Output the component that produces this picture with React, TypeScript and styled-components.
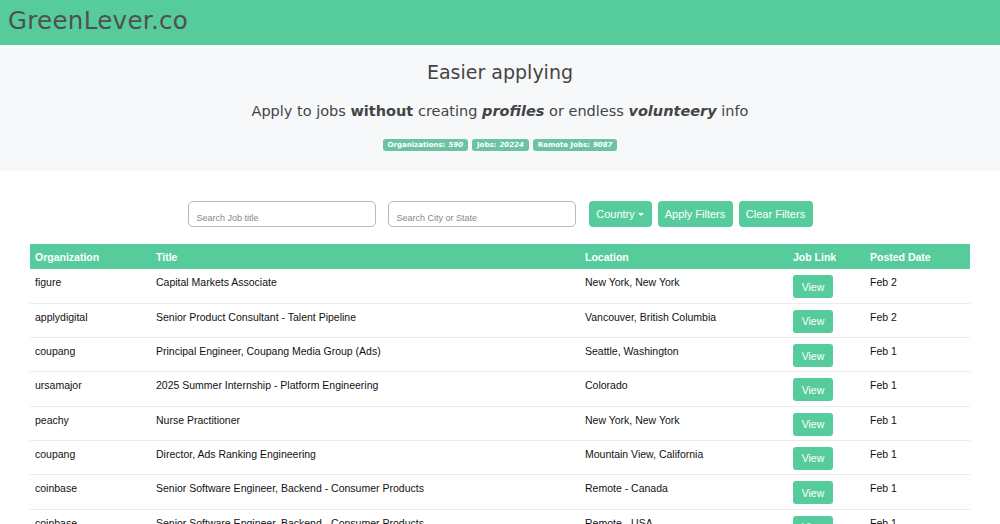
import React from 'react';
import styled, { createGlobalStyle } from 'styled-components';

const colors = {
  green: '#56cc9d',
  badge: '#6cc3a3',
  heroBg: '#f7f8fa',
  text: '#444',
  border: '#e9ecef',
};

const GlobalStyle = createGlobalStyle`
  html, body {
    margin: 0;
    padding: 0;
    background: #fff;
  }
  body {
    font-family: "Liberation Sans", Arial, sans-serif;
    color: #111;
  }
`;

const NavBar = styled.header`
  display: flex;
  align-items: center;
  height: 45px;
  padding: 0 8px;
  background-color: ${colors.green};
`;

const Brand = styled.div`
  font-family: "DejaVu Sans", sans-serif;
  font-size: 24.5px;
  color: #505050;
  letter-spacing: 0.3px;
  margin-top: -4px;
`;

const Hero = styled.section`
  display: flex;
  flex-direction: column;
  align-items: center;
  height: 126px;
  box-sizing: border-box;
  padding-top: 14px;
  background-color: ${colors.heroBg};
  font-family: "DejaVu Sans", sans-serif;
  color: ${colors.text};
`;

const HeroTitle = styled.h1`
  margin: 0;
  font-size: 19px;
  font-weight: 400;
  line-height: 26px;
`;

const HeroSub = styled.p`
  margin: 15px 0 0;
  font-size: 14.5px;
  line-height: 22px;

  b {
    font-weight: 700;
  }
  em {
    font-weight: 700;
    font-style: italic;
  }
`;

const Badges = styled.div`
  display: flex;
  gap: 4px;
  margin-top: 17px;
`;

const Badge = styled.span`
  display: inline-flex;
  align-items: center;
  height: 12px;
  padding: 0 5px;
  border-radius: 3px;
  background-color: ${colors.badge};
  color: #fff;
  font-size: 7px;
  font-weight: 700;

  em {
    margin-left: 3px;
    font-style: italic;
  }
`;

const Filters = styled.form`
  display: flex;
  justify-content: center;
  align-items: center;
  gap: 12px;
  margin-top: 30px;
`;

const SearchInput = styled.input`
  width: 188px;
  height: 26px;
  box-sizing: border-box;
  padding: 7px 8px 0;
  border: 1px solid #bbb;
  border-radius: 5px;
  font-family: "Liberation Sans", Arial, sans-serif;
  font-size: 9px;
  outline: none;

  &::placeholder {
    color: #888;
  }
`;

const ButtonGroup = styled.div`
  display: flex;
  gap: 6px;
  margin-left: 1px;
`;

const Button = styled.button<{ $w: number }>`
  display: inline-flex;
  justify-content: center;
  align-items: center;
  gap: 3px;
  width: ${({ $w }) => $w}px;
  height: 26px;
  padding: 0;
  border: none;
  border-radius: 4px;
  background-color: ${colors.green};
  color: #fff;
  font-family: "Liberation Sans", Arial, sans-serif;
  font-size: 11px;
`;

const Caret = styled.span`
  width: 0;
  height: 0;
  border-left: 3px solid transparent;
  border-right: 3px solid transparent;
  border-top: 3px solid #fff;
`;

const TableWrap = styled.div`
  padding: 17px 30px 0;
`;

const Table = styled.table`
  width: 100%;
  border-collapse: collapse;
  table-layout: fixed;
  font-size: 10.5px;
`;

const HeadCell = styled.th`
  height: 25px;
  padding: 0 5px;
  text-align: left;
  background-color: ${colors.green};
  color: #fff;
  font-weight: 700;
  vertical-align: middle;
`;

const Row = styled.tr`
  border-top: 1px solid ${colors.border};

  &:first-child {
    border-top: none;
  }
`;

const Cell = styled.td`
  height: 34.3px;
  box-sizing: border-box;
  padding: 7px 5px 0;
  vertical-align: top;
  color: #111;
`;

const LinkCell = styled(Cell)`
  padding-top: 6px;
`;

const ViewButton = styled.a`
  display: inline-flex;
  justify-content: center;
  align-items: center;
  width: 40px;
  height: 23px;
  border-radius: 3px;
  background-color: ${colors.green};
  color: #fff;
  font-size: 10.5px;
  text-decoration: none;
`;

type Job = {
  org: string;
  title: string;
  location: string;
  date: string;
};

const jobs: Job[] = [
  { org: 'figure', title: 'Capital Markets Associate', location: 'New York, New York', date: 'Feb 2' },
  { org: 'applydigital', title: 'Senior Product Consultant - Talent Pipeline', location: 'Vancouver, British Columbia', date: 'Feb 2' },
  { org: 'coupang', title: 'Principal Engineer, Coupang Media Group (Ads)', location: 'Seattle, Washington', date: 'Feb 1' },
  { org: 'ursamajor', title: '2025 Summer Internship - Platform Engineering', location: 'Colorado', date: 'Feb 1' },
  { org: 'peachy', title: 'Nurse Practitioner', location: 'New York, New York', date: 'Feb 1' },
  { org: 'coupang', title: 'Director, Ads Ranking Engineering', location: 'Mountain View, California', date: 'Feb 1' },
  { org: 'coinbase', title: 'Senior Software Engineer, Backend - Consumer Products', location: 'Remote - Canada', date: 'Feb 1' },
  { org: 'coinbase', title: 'Senior Software Engineer, Backend - Consumer Products', location: 'Remote - USA', date: 'Feb 1' },
];

export default function App() {
  return (
    <>
      <GlobalStyle />
      <NavBar>
        <Brand>GreenLever.co</Brand>
      </NavBar>

      <Hero>
        <HeroTitle>Easier applying</HeroTitle>
        <HeroSub>
          Apply to jobs <b>without</b> creating <em>profiles</em> or endless{' '}
          <em>volunteery</em> info
        </HeroSub>
        <Badges>
          <Badge>
            Organizations: <em>590</em>
          </Badge>
          <Badge>
            Jobs: <em>20224</em>
          </Badge>
          <Badge>
            Remote Jobs: <em>9087</em>
          </Badge>
        </Badges>
      </Hero>

      <Filters onSubmit={e => e.preventDefault()}>
        <SearchInput placeholder="Search Job title" />
        <SearchInput placeholder="Search City or State" />
        <ButtonGroup>
          <Button type="button" $w={63}>
            Country <Caret />
          </Button>
          <Button type="submit" $w={75}>
            Apply Filters
          </Button>
          <Button type="button" $w={74}>
            Clear Filters
          </Button>
        </ButtonGroup>
      </Filters>

      <TableWrap>
        <Table>
          <colgroup>
            <col style={{ width: 121 }} />
            <col style={{ width: 429 }} />
            <col style={{ width: 208 }} />
            <col style={{ width: 77 }} />
            <col style={{ width: 105 }} />
          </colgroup>
          <thead>
            <tr>
              <HeadCell>Organization</HeadCell>
              <HeadCell>Title</HeadCell>
              <HeadCell>Location</HeadCell>
              <HeadCell>Job Link</HeadCell>
              <HeadCell>Posted Date</HeadCell>
            </tr>
          </thead>
          <tbody>
            {jobs.map((job, i) => (
              <Row key={i}>
                <Cell>{job.org}</Cell>
                <Cell>{job.title}</Cell>
                <Cell>{job.location}</Cell>
                <LinkCell>
                  <ViewButton href="#">View</ViewButton>
                </LinkCell>
                <Cell>{job.date}</Cell>
              </Row>
            ))}
          </tbody>
        </Table>
      </TableWrap>
    </>
  );
}
